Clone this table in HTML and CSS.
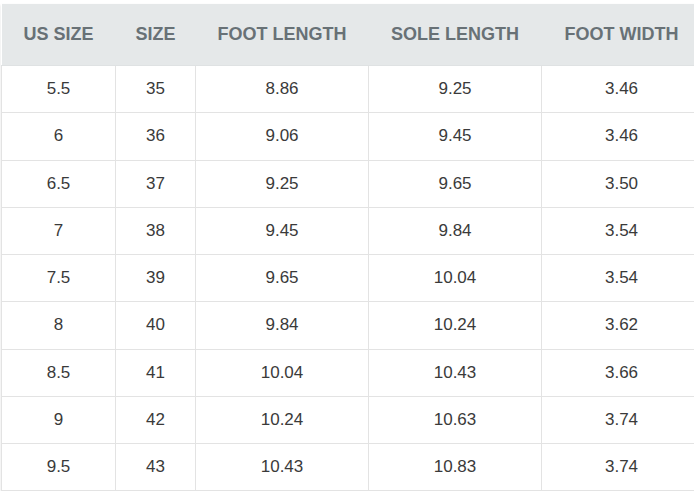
FILE: index.html
```html
<!DOCTYPE html>
<html>
<head>
<meta charset="utf-8">
<link rel="stylesheet" href="styles.css">
</head>
<body>
<div class="wrap">
<table class="chart">
<colgroup>
<col class="c1"><col class="c2"><col class="c3"><col class="c4"><col class="c5">
</colgroup>
<thead>
<tr><th>US SIZE</th><th>SIZE</th><th>FOOT LENGTH</th><th>SOLE LENGTH</th><th>FOOT WIDTH</th></tr>
</thead>
<tbody>
<tr><td>5.5</td><td>35</td><td>8.86</td><td>9.25</td><td>3.46</td></tr>
<tr><td>6</td><td>36</td><td>9.06</td><td>9.45</td><td>3.46</td></tr>
<tr><td>6.5</td><td>37</td><td>9.25</td><td>9.65</td><td>3.50</td></tr>
<tr><td>7</td><td>38</td><td>9.45</td><td>9.84</td><td>3.54</td></tr>
<tr><td>7.5</td><td>39</td><td>9.65</td><td>10.04</td><td>3.54</td></tr>
<tr><td>8</td><td>40</td><td>9.84</td><td>10.24</td><td>3.62</td></tr>
<tr><td>8.5</td><td>41</td><td>10.04</td><td>10.43</td><td>3.66</td></tr>
<tr><td>9</td><td>42</td><td>10.24</td><td>10.63</td><td>3.74</td></tr>
<tr><td>9.5</td><td>43</td><td>10.43</td><td>10.83</td><td>3.74</td></tr>
</tbody>
</table>
</div>
</body>
</html>
```
FILE: styles.css
```css
html, body {
  margin: 0;
  padding: 0;
  background: #ffffff;
  overflow: hidden;
}
.wrap {
  padding-top: 4px;
  padding-left: 1px;
  width: 720px;
}
.chart {
  border-collapse: collapse;
  table-layout: fixed;
  width: 700px;
  font-family: "Liberation Sans", Arial, sans-serif;
  box-shadow: 0 1px 2px rgba(0,0,0,0.12);
}
.c1 { width: 114px; }
.c2 { width: 80px; }
.c3 { width: 173px; }
.c4 { width: 173px; }
.c5 { width: 160px; }
.chart th {
  background: #e5e8e9;
  color: #687176;
  font-weight: bold;
  font-size: 18px;
  height: 61px;
  padding: 0;
  text-align: center;
  border-bottom: 1px solid #dfe2e3;
}
.chart td {
  font-size: 17px;
  color: #3a3a3a;
  text-align: center;
  height: 46.25px;
  padding: 0;
  border: 1px solid #e3e3e3;
  border-top: none;
}
.chart tbody tr td:first-child {
  border-left: 1px solid #e3e3e3;
}
```
